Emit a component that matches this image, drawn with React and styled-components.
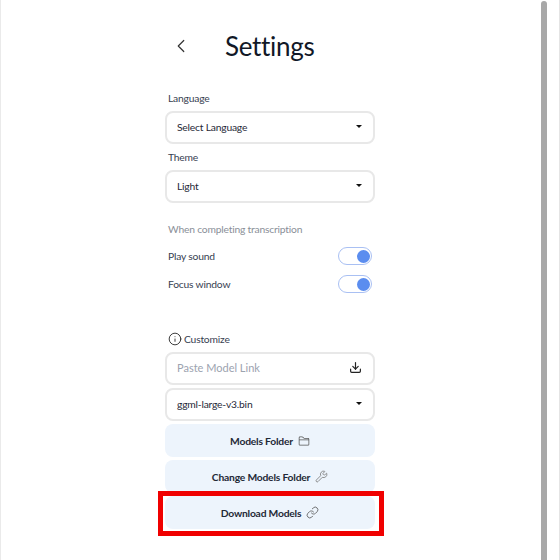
import styled, { createGlobalStyle } from "styled-components";
import { ChevronLeft, Info, Download, Link, Wrench } from "lucide-react";
import { BsFolder2 } from "react-icons/bs";

const Global = createGlobalStyle`
  html, body { margin: 0; padding: 0; background: #fff; }
  body { font-family: "Lato", "Noto Sans", sans-serif; color: #1f2937; }
`;

const Page = styled.div`
  width: 560px;
  height: 560px;
  box-sizing: border-box;
  overflow: hidden;
  position: relative;
  border-left: 1px solid #eaeaea;
  border-right: 1px solid #e4e4e4;
  padding-left: 164px;
  font-size: 10.3px;
  letter-spacing: -0.2px;
`;

const Column = styled.div`
  width: 210px;
  display: flex;
  flex-direction: column;
  position: relative;
`;

const Header = styled.header`
  display: flex;
  align-items: center;
  height: 44px;
  margin-top: 24px;
  padding-left: 5px;
  gap: 33px;
`;

const Title = styled.h1`
  margin: 0;
  font-size: 26px;
  font-weight: 400;
  letter-spacing: -0.3px;
  color: #111827;
`;

const Label = styled.div`
  line-height: 16px;
  color: #374151;
  padding-left: 3px;
  margin-top: ${(p) => p.$top || 0}px;
  margin-bottom: 5px;
`;

const Field = styled.div`
  height: 33px;
  box-sizing: border-box;
  border: 2px solid #e8e8e8;
  border-radius: 8px;
  background: #fff;
  display: flex;
  align-items: center;
  justify-content: space-between;
  padding: 0 11px 2px 10px;
  color: #1f2937;
  margin-top: ${(p) => p.$top || 0}px;
  margin-bottom: ${(p) => p.$bottom || 0}px;
`;

const Placeholder = styled.span`
  font-size: 11px;
  letter-spacing: 0;
  color: #9ca3af;
`;

const Caret = styled.span`
  width: 0;
  height: 0;
  border-left: 3px solid transparent;
  border-right: 3px solid transparent;
  border-top: 3px solid #111;
`;

const Hint = styled.div`
  line-height: 16px;
  color: #8a8f98;
  padding-left: 3px;
  margin-top: 18px;
`;

const ToggleRow = styled.div`
  display: flex;
  justify-content: space-between;
  align-items: center;
  height: 20px;
  padding: 0 3px;
  margin-top: ${(p) => p.$top || 0}px;
  color: #374151;
`;

const Toggle = styled.span`
  width: 34px;
  height: 18px;
  box-sizing: border-box;
  border: 1.5px solid #a9c0f3;
  border-radius: 9px;
  display: flex;
  align-items: center;
  justify-content: flex-end;
  padding-right: 1px;
  &::after {
    content: "";
    width: 13px;
    height: 13px;
    border-radius: 50%;
    background: #5b8def;
  }
`;

const Customize = styled.div`
  display: flex;
  align-items: center;
  gap: 2px;
  color: #374151;
  padding-left: 3px;
  margin-top: 37px;
  height: 16px;
  margin-bottom: 5px;
`;

const ActionButton = styled.div`
  height: 33px;
  margin-top: 3px;
  border-radius: 8px;
  background: #edf4fc;
  display: flex;
  align-items: center;
  justify-content: center;
  gap: 5px;
  font-weight: 700;
  color: #1f2937;
  svg { color: #555; }
`;

const Highlight = styled.div`
  position: absolute;
  left: -7px;
  top: 491px;
  width: 226px;
  height: 45px;
  box-sizing: border-box;
  border: 5px solid #f00000;
`;

const Scrollbar = styled.div`
  position: absolute;
  left: 540px;
  top: 1px;
  bottom: 0;
  width: 6px;
  border-radius: 3px 3px 0 0;
  background: #a8a8a8;
`;

export default function App() {
  return (
    <Page>
      <Global />
      <Column>
        <Header>
          <ChevronLeft size={22} strokeWidth={1.3} color="#333" />
          <Title>Settings</Title>
        </Header>
        <Label $top={22}>Language</Label>
        <Field $bottom={5}>
          Select Language
          <Caret />
        </Field>
        <Label>Theme</Label>
        <Field>
          Light
          <Caret />
        </Field>
        <Hint>When completing transcription</Hint>
        <ToggleRow $top={9}>
          Play sound
          <Toggle />
        </ToggleRow>
        <ToggleRow $top={8}>
          Focus window
          <Toggle />
        </ToggleRow>
        <Customize>
          <Info size={14} strokeWidth={1.5} color="#222" />
          Customize
        </Customize>
        <Field>
          <Placeholder>Paste Model Link</Placeholder>
          <Download size={13} strokeWidth={2.2} color="#222" />
        </Field>
        <Field $top={3}>
          ggml-large-v3.bin
          <Caret />
        </Field>
        <ActionButton>
          Models Folder
          <BsFolder2 size={12} />
        </ActionButton>
        <ActionButton>
          Change Models Folder
          <Wrench size={13} strokeWidth={1.5} color="#777" />
        </ActionButton>
        <ActionButton>
          Download Models
          <Link size={13} strokeWidth={1.5} />
        </ActionButton>
        <Highlight />
      </Column>
      <Scrollbar />
    </Page>
  );
}
